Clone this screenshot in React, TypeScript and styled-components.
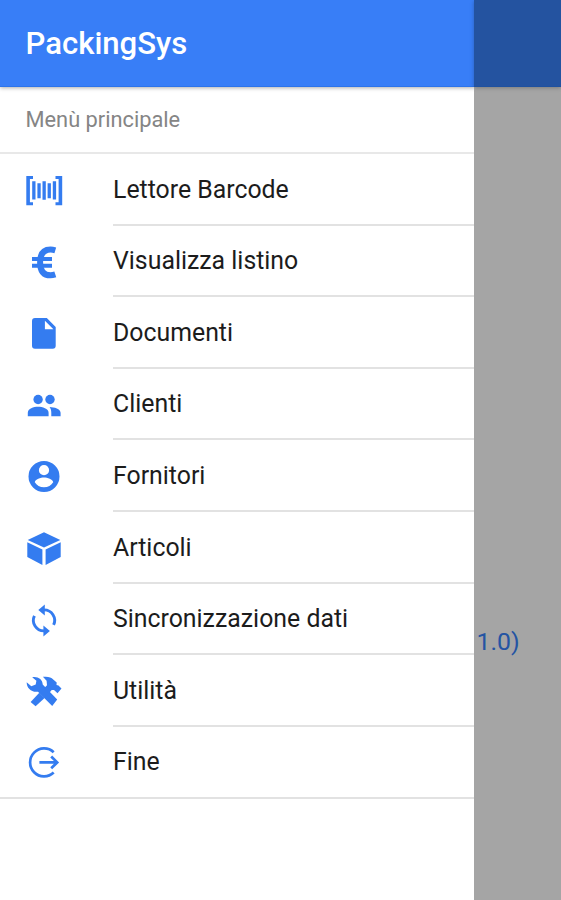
import React from 'react';
import styled, { createGlobalStyle } from 'styled-components';

const GlobalStyle = createGlobalStyle`
  * { box-sizing: border-box; }
  body { margin: 0; background: #fff; font-family: Roboto, "Liberation Sans", sans-serif; }
`;

const Screen = styled.div`
  display: grid;
  grid-template-columns: 474px 1fr;
  width: 561px;
  height: 900px;
  overflow: hidden;
`;

const Drawer = styled.nav`
  display: flex;
  flex-direction: column;
  background: #fff;
`;

const Toolbar = styled.header<{ $dimmed?: boolean }>`
  flex: none;
  display: flex;
  align-items: center;
  height: 87px;
  padding: 2px 0 0 25.5px;
  background: ${(p) => (p.$dimmed ? '#2453a0' : '#387ef7')};
  border-bottom: 1px solid ${(p) => (p.$dimmed ? '#1f519f' : '#2d74ea')};
  box-shadow: 0 1px 4px ${(p) => (p.$dimmed ? 'rgba(0,0,0,.25)' : 'rgba(0,0,0,.32)')};
`;

const Title = styled.h1`
  margin: 0;
  color: #fff;
  font-size: 31.1px;
  font-weight: 500;
  line-height: 40px;
`;

const ListHeader = styled.div`
  flex: none;
  height: 67px;
  padding: 18px 0 0 25.5px;
  border-bottom: 2px solid #e8e8e8;
  color: #858585;
  font-size: 21.8px;
  line-height: 30px;
`;

const Menu = styled.ul`
  margin: 0;
  padding: 0;
  list-style: none;
  border-bottom: 2px solid #e2e2e2;
`;

const Item = styled.li`
  display: flex;
  height: 71.6px;
  padding-left: 24px;

  &:last-child { height: 70.2px; }
  &:last-child > span { border-bottom: 0; }
`;

const Icon = styled.svg`
  flex: none;
  width: 40px;
  height: 40px;
  margin: 17px 49px 0 0;
  overflow: visible;
  color: #347cf0;
  fill: currentColor;
`;

const Label = styled.span`
  flex: 1;
  padding-top: 20.7px;
  border-bottom: 2px solid #e2e2e2;
  color: #1c1c1c;
  font-size: 24.85px;
  line-height: 30px;
`;

const Backdrop = styled.main`
  display: flex;
  flex-direction: column;
  background: #a5a5a5;
`;

const Version = styled.p`
  margin: 540px 0 0 2.5px;
  color: #2454a3;
  font-size: 24.8px;
  line-height: 30px;
`;

const items: { label: string; icon: React.ReactNode }[] = [
  {
    label: 'Lettore Barcode',
    icon: (
      <>
        <path d="M9 5H2.3v29.3H9v-3.1H5.9V8.1H9zM31.5 5h6.7v29.3h-6.7v-3.1h3.1V8.1h-3.1z" />
        <path d="M8.2 10.3h3.3v18.2H8.2zM13.4 12.2h3.3v15h-3.3zM18.5 10.3h3.3v18.4h-3.3zM23.6 12.2h3.3v15h-3.3zM28.8 10.3h3.3v18.2h-3.3z" />
      </>
    ),
  },
  {
    label: 'Visualizza listino',
    icon: (
      <>
        <path
          d="M31.3 7.3C29.3 6.7 27.8 6.5 26.5 6.5C18.8 6.5 16.1 12 16.1 19.4S18.8 32.3 26.5 32.3C28 32.3 29.5 32 31.3 31.4"
          fill="none" stroke="currentColor" strokeWidth="6"
        />
        <path d="M8 14h20v3.9H8zM8 20.8h20v3.9H8z" />
      </>
    ),
  },
  {
    label: 'Documenti',
    icon: (
      <path
        fillRule="evenodd"
        d="M11 4h11.8l8.9 8.9v18.8a3 3 0 0 1-3 3H11a3 3 0 0 1-3-3V7a3 3 0 0 1 3-3zM20.9 6.7v8.5h8.5z"
      />
    ),
  },
  {
    label: 'Clienti',
    icon: (
      <>
        <circle cx="14.1" cy="13.5" r="4.7" />
        <circle cx="26" cy="13.5" r="4.7" />
        <path d="M3.8 30.3v-3.5C3.8 22.6 9.6 20.8 14 20.8S24.6 22.6 24.6 26.8v3.5z" />
        <path d="M25.6 21C30.3 21.2 36.6 22.8 36.6 26.8v3.5h-9.3v-3.5c0-2.6-.6-4.3-1.7-5.8z" />
      </>
    ),
  },
  {
    label: 'Fornitori',
    icon: (
      <path
        fillRule="evenodd"
        d="M20 4a15.5 15.5 0 1 0 0 31a15.5 15.5 0 0 0 0-31zm0 4.1a5.1 5.1 0 1 1 0 10.2a5.1 5.1 0 0 1 0-10.2zm0 22.200c-4 0-7.400-2-9.200-5c.2-3.200 6-4.900 9.200-4.900s9 1.700 9.200 4.900c-1.800 3-5.200 5-9.200 5z"
      />
    ),
  },
  {
    label: 'Articoli',
    icon: (
      <path d="M20 3.3l16.3 7.7L20 18.5 3.7 11zM3.3 13.3l15.1 7.2v15.6L3.3 28.1zM36.7 13.3l-15.1 7.2v15.6l15.1-8z" />
    ),
  },
  {
    label: 'Sincronizzazione dati',
    icon: (
      <>
        <path
          d="M20 8.9a10.5 10.5 0 0 1 9.6 15M20 29.9a10.5 10.5 0 0 1-9.6-15"
          fill="none" stroke="currentColor" strokeWidth="2.9"
        />
        <path d="M14.3 8.9l6.5-5.5v11zM25.9 29.9l-6.5-5.5v11z" />
      </>
    ),
  },
  {
    label: 'Utilità',
    icon: (
      <>
        <path d="M8.2 5.2C13.5 4 18.8 7.2 18.7 12.5L33.2 27.4L28.2 34L14 19.7C8 20.8 2.5 16.5 2.7 10.3L7.3 14.2L11.7 12.6L12.4 8.8z" />
        <path d="M18.9 4.7C23 4.7 25.8 5 27.8 6.2L32.7 10.6L32.5 12.9L34.5 13.4L37.5 16.5L33.5 21.3L30 17.9L27.7 18L25 21.3L20.3 16.1L23 13.3L22.6 8.7z" />
        <path d="M6.6 30L15.3 20.7L20.6 26L11.6 34.3z" />
      </>
    ),
  },
  {
    label: 'Fine',
    icon: (
      <path
        d="M29.7 8.2A14 14 0 1 0 29.7 28.6M15.4 18.4H33.2M27.2 12.5L33.2 18.4L27.2 24.3"
        fill="none" stroke="currentColor" strokeWidth="2.7"
      />
    ),
  },
];

export default function App() {
  return (
    <>
      <GlobalStyle />
      <Screen>
        <Drawer>
          <Toolbar><Title>PackingSys</Title></Toolbar>
          <ListHeader>Menù principale</ListHeader>
          <Menu>
            {items.map((item) => (
              <Item key={item.label}>
                <Icon viewBox="0 0 40 40" aria-hidden="true">{item.icon}</Icon>
                <Label>{item.label}</Label>
              </Item>
            ))}
          </Menu>
        </Drawer>
        <Backdrop>
          <Toolbar $dimmed />
          <Version>1.0)</Version>
        </Backdrop>
      </Screen>
    </>
  );
}
